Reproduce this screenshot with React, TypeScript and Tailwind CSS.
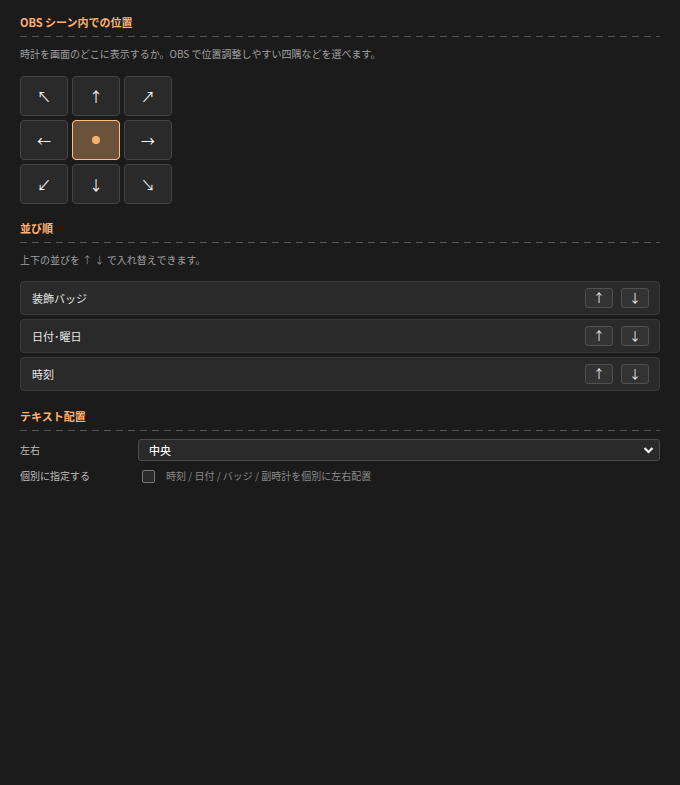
import { useState } from 'react';

const arrows = ['↖', '↑', '↗', '←', '', '→', '↙', '↓', '↘'];
const orderItems = ['装飾バッジ', '日付･曜日', '時刻'];

const SectionTitle = ({ children }: { children: React.ReactNode }) => (
  <div>
    <h2 className="text-[11px] font-bold leading-4 text-[#ffb070] pb-[6px]">{children}</h2>
    <div className="h-px bg-[repeating-linear-gradient(90deg,#555_0_7px,transparent_7px_12px)]" />
  </div>
);

const App = () => {
  const [pos, setPos] = useState(4);

  return (
    <div
      className="min-h-[785px] bg-[#1b1b1b] px-5 pt-[14px] text-[#e0e0e0]"
      style={{ fontFamily: '"Noto Sans CJK JP", "Noto Sans", sans-serif' }}
    >
      {/* Position */}
      <section>
        <SectionTitle>OBS シーン内での位置</SectionTitle>
        <p className="mt-[9px] text-[10px] leading-4 text-[#a0a0a0]">
          時計を画面のどこに表示するか。OBS で位置調整しやすい四隅などを選べます。
        </p>
        <div className="mt-[14px] grid grid-cols-[48px_48px_48px] gap-1">
          {arrows.map((a, i) => (
            <button
              key={i}
              onClick={() => setPos(i)}
              className={
                i === pos
                  ? 'h-10 rounded-[4px] border border-[#ffbf80] bg-[#6a533a] text-[14px] text-[#f0f0f0] flex items-center justify-center'
                  : 'h-10 rounded-[4px] border border-[#444] bg-[#2a2a2a] text-[14px] text-[#f0f0f0] flex items-center justify-center'
              }
            >
              {i === 4 ? <span className="block w-2 h-2 rounded-full bg-[#ffb070]" /> : a}
            </button>
          ))}
        </div>
      </section>

      {/* Order */}
      <section className="mt-4">
        <SectionTitle>並び順</SectionTitle>
        <p className="mt-[9px] text-[10px] leading-4 text-[#a0a0a0]">
          上下の並びを <span className="text-[#8a8a8a]">↑ ↓</span> で入れ替えできます。
        </p>
        <div className="mt-[13px] flex flex-col gap-1">
          {orderItems.map((item) => (
            <div
              key={item}
              className="h-[34px] flex items-center justify-between rounded-[4px] border border-[#3a3a3a] bg-[#2a2a2a] pl-[11px] pr-[10px]"
            >
              <span className="text-[11px] text-[#e8e8e8]">{item}</span>
              <div className="flex gap-2">
                <button className="w-7 h-5 rounded-[3px] border border-[#505050] bg-[#333] text-[12px] leading-none text-[#eee] flex items-center justify-center">
                  ↑
                </button>
                <button className="w-7 h-5 rounded-[3px] border border-[#505050] bg-[#333] text-[12px] leading-none text-[#eee] flex items-center justify-center">
                  ↓
                </button>
              </div>
            </div>
          ))}
        </div>
      </section>

      {/* Text align */}
      <section className="mt-[17px]">
        <SectionTitle>テキスト配置</SectionTitle>
        <div className="mt-2 flex items-center">
          <span className="w-[118px] text-[10px] leading-4 text-[#bdbdbd]">左右</span>
          <div className="relative flex-1">
            <select className="block w-full h-[22px] appearance-none rounded-[3px] border border-[#4a4a4a] bg-[#2a2a2a] pl-[10px] text-[11px] font-medium text-white outline-none">
              <option>中央</option>
              <option>左</option>
              <option>右</option>
            </select>
            <svg
              className="pointer-events-none absolute right-[6px] top-[6px]"
              width="11"
              height="10"
              viewBox="0 0 11 10"
            >
              <path d="M1.5 3 L5.5 7 L9.5 3" fill="none" stroke="#f0f0f0" strokeWidth="2.2" />
            </svg>
          </div>
        </div>
        <div className="mt-[7px] flex items-center">
          <span className="w-[122px] text-[10px] leading-4 text-[#bdbdbd]">個別に指定する</span>
          <span className="w-[13px] h-[13px] rounded-[2px] border border-[#777] bg-[#2a2a2a]" />
          <span className="ml-[11px] text-[10px] leading-4 text-[#8a8a8a]">
            時刻 / 日付 / バッジ / 副時計を個別に左右配置
          </span>
        </div>
      </section>
    </div>
  );
};

export default App;
